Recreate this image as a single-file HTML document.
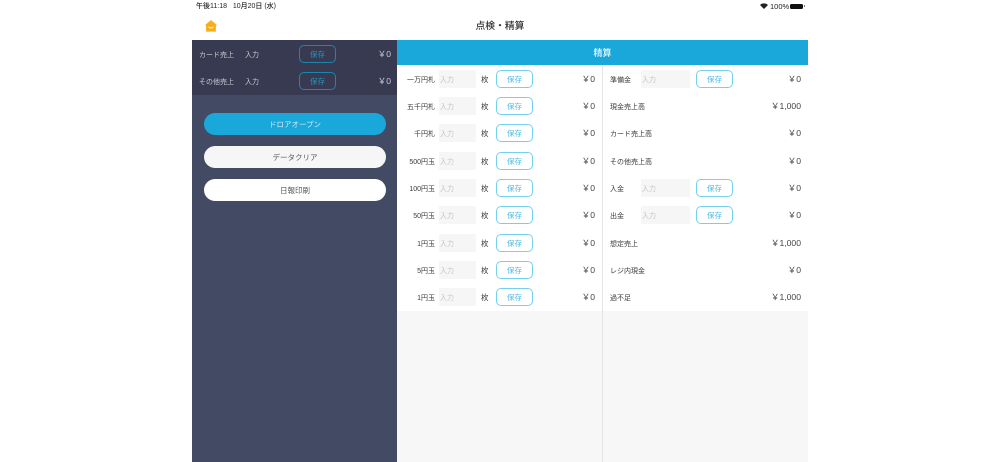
<!DOCTYPE html>
<html lang="ja"><head><meta charset="utf-8"><style>
html,body{margin:0;padding:0;width:1000px;height:462px;overflow:hidden;background:#fff}
body{position:relative;font-family:"Liberation Sans","Noto Sans CJK JP",sans-serif;font-size:7px;color:#3a3a3a}
div,span,svg{position:absolute;white-space:nowrap}
.c{display:flex;align-items:center;justify-content:center;box-sizing:border-box}
.l{height:18px;line-height:21px}
.lab{right:565px;text-align:right}
.m{height:18px;line-height:20px;left:481px;font-size:7.5px}
.inp{background:#f6f6f6;height:18px;line-height:21px;color:#c4c4c4;box-sizing:border-box;padding-left:1px}
.btn{height:18px;width:37px;border:1px solid #74d0ee;border-radius:5px;color:#4fb9e2;background:#fff;font-size:7.5px}
.amt{height:18px;line-height:18px;text-align:right;color:#444;font-size:8.6px}
.d{color:#c9cbd3}
.pill{left:204px;width:182px;height:22px;border-radius:11px;font-size:7.5px}
</style></head><body>
<div class="l" style="left:196px;top:-4px;color:#222;font-size:7px;font-weight:500">午後11:18 &nbsp; 10月20日 (水)</div>
<svg style="left:760px;top:3px" width="8" height="6" viewBox="0 0 8 6"><path d="M0 2 A5.6 5.6 0 0 1 8 2 L4 6 Z" fill="#222"/></svg>
<div class="l" style="left:770px;top:-4px;color:#222;font-size:7.5px">100%</div>
<div style="left:790px;top:3.5px;width:13px;height:5.5px;background:#111;border-radius:1.5px"></div>
<div style="left:804px;top:5px;width:1px;height:2px;background:#777"></div>
<svg style="left:204.5px;top:19.5px" width="12" height="12" viewBox="0 0 13 13"><path d="M6.5 0 L13 5.5 L11.8 6 L11.8 12.6 L1.2 12.6 L1.2 6 L0 5.5 Z" fill="#f7ae1a"/><path d="M3.8 7.4 Q6.5 10 9.2 7.4" fill="none" stroke="#fff" stroke-width="1"/></svg>
<div style="left:400px;width:200px;top:16px;text-align:center;font-size:9.8px;font-weight:500;color:#333;height:20px;line-height:21px">点検・精算</div>

<div style="left:192px;top:40px;width:205px;height:422px;background:#434a63"></div>
<div style="left:192px;top:40px;width:205px;height:55px;background:#383a52"></div>
<div class="l d" style="left:199px;top:45px">カード売上</div>
<div class="l d" style="left:245px;top:45px">入力</div>
<div class="c" style="left:299px;top:45px;width:37px;height:18px;border:1px solid #1c86ab;border-radius:5px;color:#2b93b8;font-size:7.5px">保存</div>
<div class="amt d" style="left:340px;width:51px;top:45px">￥0</div>
<div class="l d" style="left:199px;top:72px">その他売上</div>
<div class="l d" style="left:245px;top:72px">入力</div>
<div class="c" style="left:299px;top:72px;width:37px;height:18px;border:1px solid #1c86ab;border-radius:5px;color:#2b93b8;font-size:7.5px">保存</div>
<div class="amt d" style="left:340px;width:51px;top:72px">￥0</div>

<div class="c pill" style="top:113px;background:#1aa7da;color:#cfeaf6">ドロアオープン</div>
<div class="c pill" style="top:146px;background:#f6f6f6;color:#555">データクリア</div>
<div class="c pill" style="top:179px;background:#fff;color:#555">日報印刷</div>

<div style="left:397px;top:311px;width:411px;height:151px;background:#f7f7f7"></div>
<div style="left:397px;top:40px;width:411px;height:25px;background:#1aa7da"></div>
<div class="c" style="left:397px;top:40px;width:411px;height:25px;color:#eef9fd;font-size:9px;font-weight:500">精算</div>
<div style="left:602px;top:65px;width:1px;height:397px;background:#e4e4e4"></div>

<div class="l lab" style="top:70px">一万円札</div><div class="inp" style="left:439px;top:70px;width:37px">入力</div><div class="m" style="top:70px">枚</div><div class="c btn" style="left:496px;top:70px">保存</div><div class="amt" style="left:540px;width:55px;top:70px">￥0</div>
<div class="l lab" style="top:97px">五千円札</div><div class="inp" style="left:439px;top:97px;width:37px">入力</div><div class="m" style="top:97px">枚</div><div class="c btn" style="left:496px;top:97px">保存</div><div class="amt" style="left:540px;width:55px;top:97px">￥0</div>
<div class="l lab" style="top:124px">千円札</div><div class="inp" style="left:439px;top:124px;width:37px">入力</div><div class="m" style="top:124px">枚</div><div class="c btn" style="left:496px;top:124px">保存</div><div class="amt" style="left:540px;width:55px;top:124px">￥0</div>
<div class="l lab" style="top:152px">500円玉</div><div class="inp" style="left:439px;top:152px;width:37px">入力</div><div class="m" style="top:152px">枚</div><div class="c btn" style="left:496px;top:152px">保存</div><div class="amt" style="left:540px;width:55px;top:152px">￥0</div>
<div class="l lab" style="top:179px">100円玉</div><div class="inp" style="left:439px;top:179px;width:37px">入力</div><div class="m" style="top:179px">枚</div><div class="c btn" style="left:496px;top:179px">保存</div><div class="amt" style="left:540px;width:55px;top:179px">￥0</div>
<div class="l lab" style="top:206px">50円玉</div><div class="inp" style="left:439px;top:206px;width:37px">入力</div><div class="m" style="top:206px">枚</div><div class="c btn" style="left:496px;top:206px">保存</div><div class="amt" style="left:540px;width:55px;top:206px">￥0</div>
<div class="l lab" style="top:234px">1円玉</div><div class="inp" style="left:439px;top:234px;width:37px">入力</div><div class="m" style="top:234px">枚</div><div class="c btn" style="left:496px;top:234px">保存</div><div class="amt" style="left:540px;width:55px;top:234px">￥0</div>
<div class="l lab" style="top:261px">5円玉</div><div class="inp" style="left:439px;top:261px;width:37px">入力</div><div class="m" style="top:261px">枚</div><div class="c btn" style="left:496px;top:261px">保存</div><div class="amt" style="left:540px;width:55px;top:261px">￥0</div>
<div class="l lab" style="top:288px">1円玉</div><div class="inp" style="left:439px;top:288px;width:37px">入力</div><div class="m" style="top:288px">枚</div><div class="c btn" style="left:496px;top:288px">保存</div><div class="amt" style="left:540px;width:55px;top:288px">￥0</div>

<div class="l" style="left:610px;top:70px">準備金</div><div class="inp" style="left:641px;top:70px;width:49px">入力</div><div class="c btn" style="left:696px;top:70px">保存</div><div class="amt" style="left:740px;width:61px;top:70px">￥0</div>
<div class="l" style="left:610px;top:97px">現金売上高</div><div class="amt" style="left:740px;width:61px;top:97px">￥1,000</div>
<div class="l" style="left:610px;top:124px">カード売上高</div><div class="amt" style="left:740px;width:61px;top:124px">￥0</div>
<div class="l" style="left:610px;top:152px">その他売上高</div><div class="amt" style="left:740px;width:61px;top:152px">￥0</div>
<div class="l" style="left:610px;top:179px">入金</div><div class="inp" style="left:641px;top:179px;width:49px">入力</div><div class="c btn" style="left:696px;top:179px">保存</div><div class="amt" style="left:740px;width:61px;top:179px">￥0</div>
<div class="l" style="left:610px;top:206px">出金</div><div class="inp" style="left:641px;top:206px;width:49px">入力</div><div class="c btn" style="left:696px;top:206px">保存</div><div class="amt" style="left:740px;width:61px;top:206px">￥0</div>
<div class="l" style="left:610px;top:234px">想定売上</div><div class="amt" style="left:740px;width:61px;top:234px">￥1,000</div>
<div class="l" style="left:610px;top:261px">レジ内現金</div><div class="amt" style="left:740px;width:61px;top:261px">￥0</div>
<div class="l" style="left:610px;top:288px">過不足</div><div class="amt" style="left:740px;width:61px;top:288px">￥1,000</div>
</body></html>
